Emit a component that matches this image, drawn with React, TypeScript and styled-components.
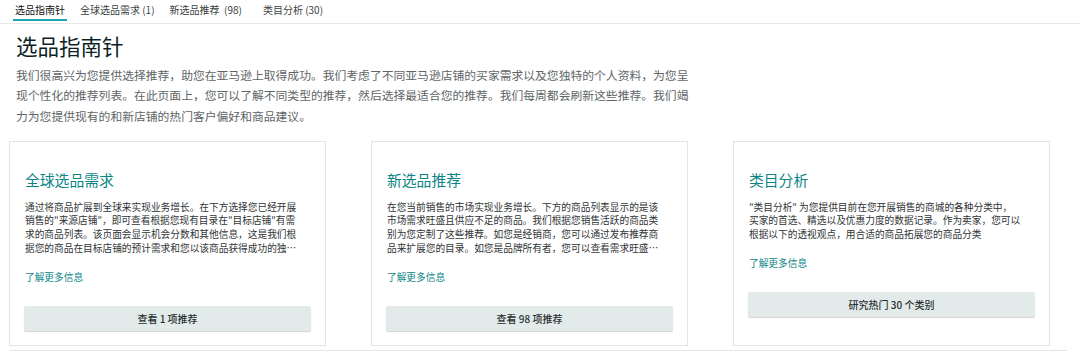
import React from "react";
import styled, { createGlobalStyle } from "styled-components";

const GlobalStyle = createGlobalStyle`
  html, body {
    margin: 0;
    padding: 0;
    background: #ffffff;
  }
  body {
    font-family: "Noto Sans CJK SC", "Noto Sans", sans-serif;
    color: #0f1111;
  }
`;

const Page = styled.div`
  width: 1080px;
  height: 362px;
  overflow: hidden;
  background: #fff;
`;

const TabBar = styled.nav`
  display: flex;
  align-items: flex-start;
  gap: 11px;
  height: 23px;
  padding-left: 13px;
  border-bottom: 1px solid #e6e6e6;
`;

const Tab = styled.div<{ $active?: boolean; $wide?: boolean }>`
  box-sizing: border-box;
  height: 21px;
  padding: 3px 2px 0;
  margin-left: ${(p) => (p.$wide ? "6px" : "0")};
  font-size: 10px;
  line-height: 14px;
  white-space: pre;
  color: ${(p) => (p.$active ? "#0f1111" : "#3a3f40")};
  border-bottom: 2px solid ${(p) => (p.$active ? "#1ba5b5" : "transparent")};
`;

const Header = styled.header`
  padding-left: 16px;
`;

const Title = styled.h1`
  margin: 8px 0 0;
  font-size: 21.5px;
  line-height: 28px;
  font-weight: 400;
  color: #0d1f26;
`;

const Intro = styled.p`
  margin: 5px 0 0;
  width: 680px;
  font-size: 11.8px;
  line-height: 20.3px;
  color: #606566;
`;

const CardSection = styled.section`
  display: flex;
  gap: 45px;
  align-items: stretch;
  width: 1058px;
  margin: 15px 0 0 9px;
  padding-bottom: 4px;
  border-bottom: 1px solid #e6e6e6;
`;

const Card = styled.article`
  box-sizing: border-box;
  width: 317px;
  padding: 28px 14px 14px;
  border: 1px solid #e4e4e4;
  display: flex;
  flex-direction: column;
  align-items: flex-start;
`;

const CardTitle = styled.h2`
  margin: 0 0 0 1px;
  font-size: 14.8px;
  line-height: 20px;
  font-weight: 400;
  color: #0b8585;
`;

const CardText = styled.p`
  margin: 11px 0 0 1px;
  width: 276px;
  font-size: 9.7px;
  line-height: 13.6px;
  color: #2f3435;
  display: -webkit-box;
  -webkit-box-orient: vertical;
  -webkit-line-clamp: 4;
  overflow: hidden;
`;

const MoreLink = styled.a`
  margin: 14.4px 0 0 1px;
  font-size: 9.7px;
  line-height: 14px;
  color: #0b8585;
  text-decoration: none;
`;

const ActionButton = styled.button`
  margin-top: 22px;
  width: 100%;
  height: 25px;
  border: none;
  border-radius: 2px;
  background: #e2eaea;
  box-shadow: 0 1px 1px rgba(0, 0, 0, 0.18);
  font-family: "Noto Sans CJK SC", "Noto Sans", sans-serif;
  font-size: 10px;
  font-weight: 500;
  color: #283132;
  padding: 0;
`;

type CardData = {
  title: string;
  text: React.ReactNode;
  button: string;
};

const cards: CardData[] = [
  {
    title: "全球选品需求",
    text:
      '通过将商品扩展到全球来实现业务增长。在下方选择您已经开展销售的"来源店铺"，即可查看根据您现有目录在"目标店铺"有需求的商品列表。该页面会显示机会分数和其他信息，这是我们根据您的商品在目标店铺的预计需求和您以该商品获得成功的独特机会来计算的。',
    button: "查看 1 项推荐",
  },
  {
    title: "新选品推荐",
    text:
      "在您当前销售的市场实现业务增长。下方的商品列表显示的是该市场需求旺盛且供应不足的商品。我们根据您销售活跃的商品类别为您定制了这些推荐。如您是经销商，您可以通过发布推荐商品来扩展您的目录。如您是品牌所有者，您可以查看需求旺盛的商品来开发新品。",
    button: "查看 98 项推荐",
  },
  {
    title: "类目分析",
    text: (
      <>
        {'"类目分析" 为您提供目前在您开展销售的商城的各种分类中，'}
        <br />
        买家的首选、精选以及优惠力度的数据记录。作为卖家，您可以根据以下的透视观点，用合适的商品拓展您的商品分类
      </>
    ),
    button: "研究热门 30 个类别",
  },
];

export default function App() {
  return (
    <Page>
      <GlobalStyle />
      <TabBar>
        <Tab $active>选品指南针</Tab>
        <Tab>全球选品需求 (1)</Tab>
        <Tab>{"新选品推荐\u00a0 (98)"}</Tab>
        <Tab $wide>类目分析 (30)</Tab>
      </TabBar>
      <Header>
        <Title>选品指南针</Title>
        <Intro>
          我们很高兴为您提供选择推荐，助您在亚马逊上取得成功。我们考虑了不同亚马逊店铺的买家需求以及您独特的个人资料，为您呈现个性化的推荐列表。在此页面上，您可以了解不同类型的推荐，然后选择最适合您的推荐。我们每周都会刷新这些推荐。我们竭力为您提供现有的和新店铺的热门客户偏好和商品建议。
        </Intro>
      </Header>
      <CardSection>
        {cards.map((c) => (
          <Card key={c.title}>
            <CardTitle>{c.title}</CardTitle>
            <CardText>{c.text}</CardText>
            <MoreLink href="#">了解更多信息</MoreLink>
            <ActionButton>{c.button}</ActionButton>
          </Card>
        ))}
      </CardSection>
    </Page>
  );
}
